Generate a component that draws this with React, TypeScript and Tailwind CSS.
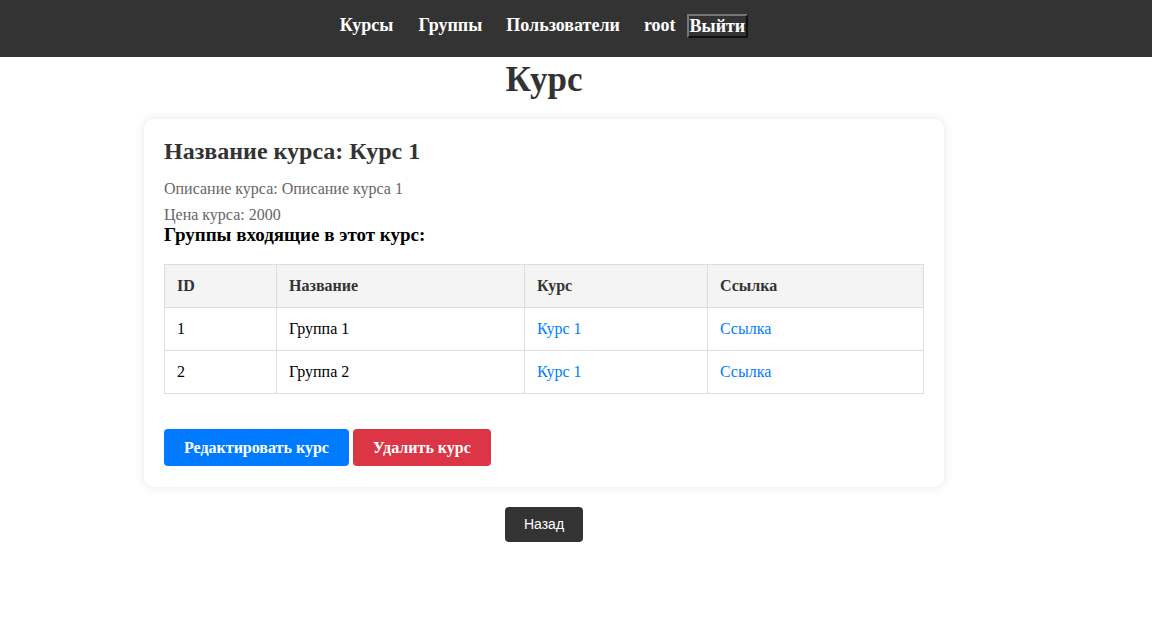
import React from "react";

const groups = [
  { id: 1, name: "Группа 1", course: "Курс 1" },
  { id: 2, name: "Группа 2", course: "Курс 1" },
];

export default function App() {
  return (
    <div className="min-h-screen bg-white font-['Liberation_Serif',serif] text-[#333]">
      {/* Top bar */}
      <header className="h-[57px] bg-[#333]">
        <nav className="flex w-[1088px] items-center justify-center pt-[12px] text-[18px] font-bold text-white">
          <a className="mr-[25px]">Курсы</a>
          <a className="mr-[24px]">Группы</a>
          <a className="mr-[24px]">Пользователи</a>
          <span className="mr-[11px]">root</span>
          <button className="border-2 border-[#777] border-r-[#111] border-b-[#111] bg-[#333] px-[1px] leading-[20px] text-white">
            Выйти
          </button>
        </nav>
      </header>

      <main className="flex w-[1088px] flex-col items-center">
        <h1 className="mt-[3px] text-[35px] font-bold leading-[40px]">Курс</h1>

        <section className="mt-[19px] w-[800px] rounded-[10px] bg-white px-5 pt-5 pb-[21px] shadow-[0_0_10px_rgba(0,0,0,0.1)]">
          <h2 className="text-[24px] font-bold leading-[24px]">Название курса: Курс 1</h2>
          <p className="mt-[17px] text-[16px] leading-[18px] text-[#666]">Описание курса: Описание курса 1</p>
          <p className="mt-[8px] text-[16px] leading-[18px] text-[#666]">Цена курса: 2000</p>
          <h3 className="text-[19px] font-bold leading-[22px] text-black">Группы входящие в этот курс:</h3>

          <table className="mt-[18px] w-full border-collapse text-[16px]">
            <thead>
              <tr className="bg-[#f4f4f4]">
                <th className="h-[43px] w-[112px] border border-[#ddd] px-3 text-left font-bold">ID</th>
                <th className="h-[43px] w-[248px] border border-[#ddd] px-3 text-left font-bold">Название</th>
                <th className="h-[43px] w-[183px] border border-[#ddd] px-3 text-left font-bold">Курс</th>
                <th className="h-[43px] border border-[#ddd] px-3 text-left font-bold">Ссылка</th>
              </tr>
            </thead>
            <tbody className="text-black">
              {groups.map((g) => (
                <tr key={g.id}>
                  <td className="h-[43px] border border-[#ddd] px-3">{g.id}</td>
                  <td className="h-[43px] border border-[#ddd] px-3">{g.name}</td>
                  <td className="h-[43px] border border-[#ddd] px-3 text-[#007bff]">{g.course}</td>
                  <td className="h-[43px] border border-[#ddd] px-3 text-[#007bff]">Ссылка</td>
                </tr>
              ))}
            </tbody>
          </table>

          <div className="mt-[35px] flex gap-[4px]">
            <button className="h-[37px] rounded-[4px] bg-[#007bff] px-5 text-[16px] font-bold text-white">
              Редактировать курс
            </button>
            <button className="h-[37px] rounded-[4px] bg-[#dc3545] px-5 text-[16px] font-bold text-white">
              Удалить курс
            </button>
          </div>
        </section>

        <button className="mt-[20px] h-[35px] w-[78px] rounded-[4px] bg-[#333] font-['Liberation_Sans',Arial,sans-serif] text-[14px] text-white">
          Назад
        </button>
      </main>
    </div>
  );
}
